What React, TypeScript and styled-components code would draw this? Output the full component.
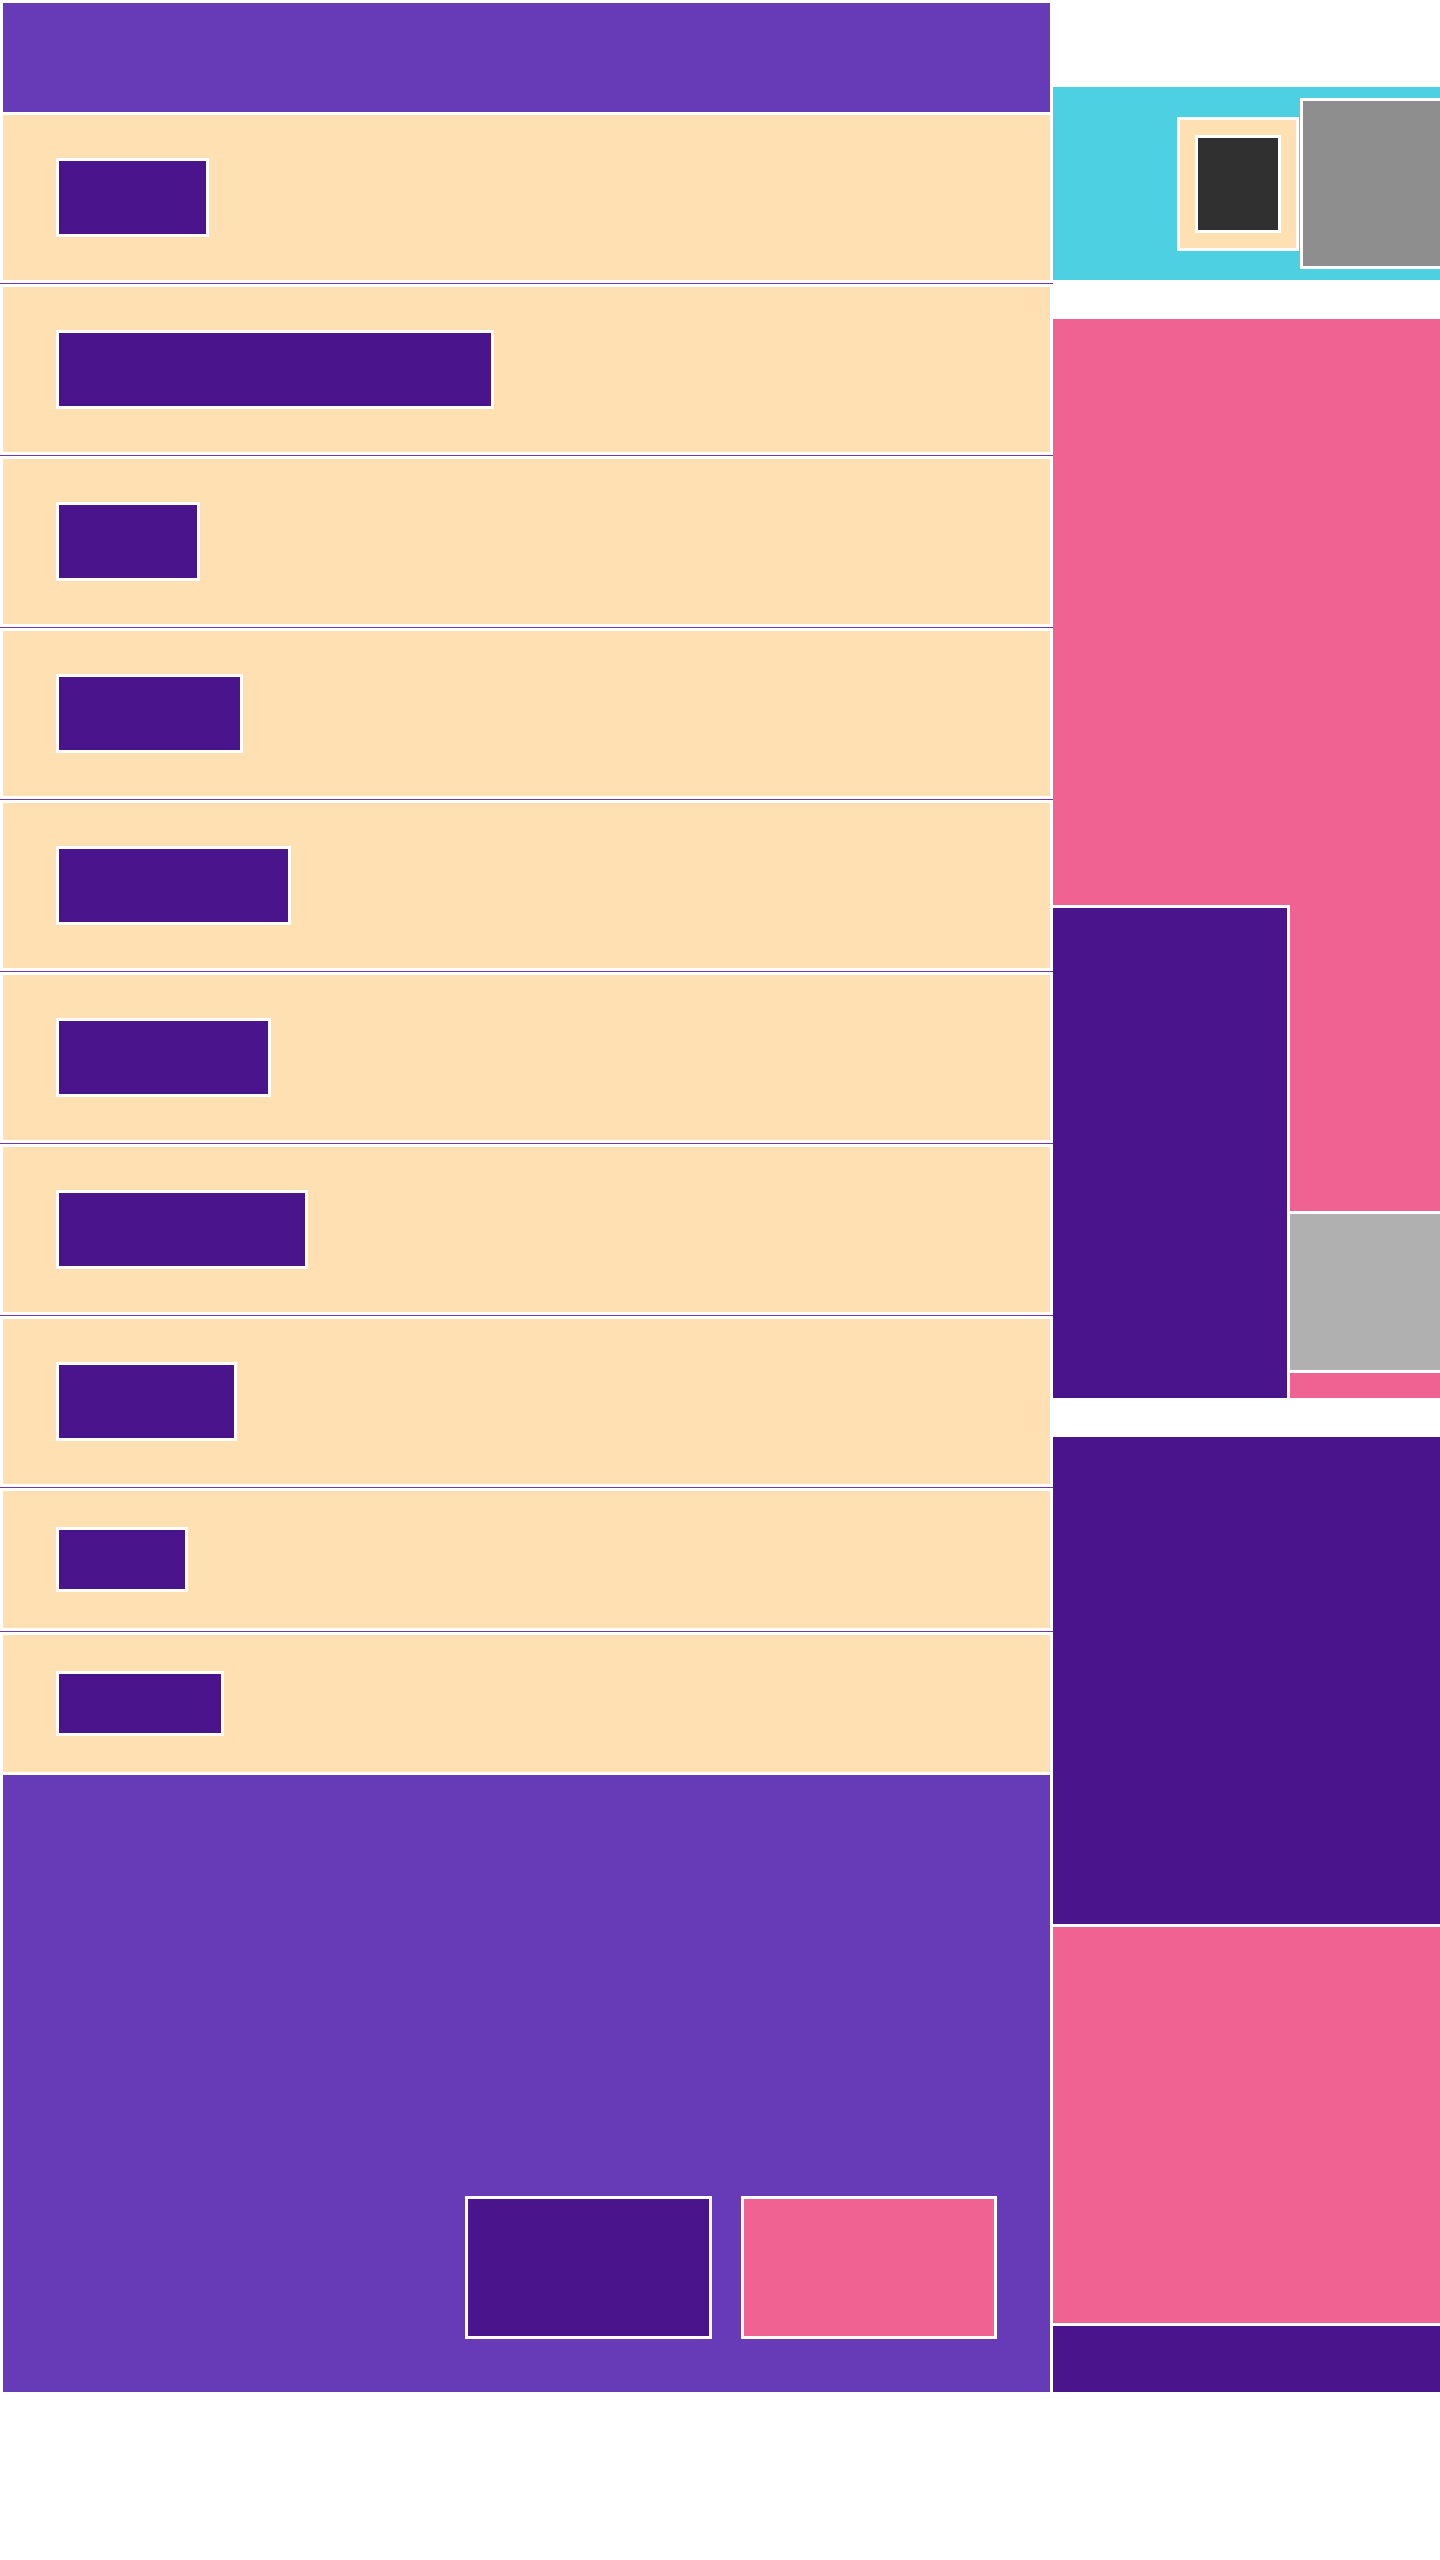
import styled, { createGlobalStyle } from 'styled-components';

const Global = createGlobalStyle`
  html, body {
    margin: 0;
    padding: 0;
    background: #ffffff;
    font-family: 'Liberation Sans', Arial, sans-serif;
  }
  *, *::before, *::after {
    box-sizing: border-box;
  }
`;

const c = {
  purple: '#673ab7',
  peach: '#ffe0b2',
  deep: '#4a148c',
  cyan: '#4dd0e1',
  pink: '#f06292',
  gray: '#8e8e8e',
  grayLight: '#b0b0b0',
  ink: '#303030',
  line: '#ffffff',
};

const Page = styled.div`
  display: flex;
  align-items: flex-start;
  width: 1440px;
  overflow: hidden;
`;

const Main = styled.main`
  flex: 0 0 1053px;
  display: flex;
  flex-direction: column;
  background: ${c.purple};
`;

const Header = styled.header`
  height: 112px;
  border: 3px solid ${c.line};
  border-bottom: none;
  background: ${c.purple};
`;

const List = styled.div`
  display: flex;
  flex-direction: column;
  gap: 1px;
`;

const Row = styled.div<{ $h: number }>`
  display: flex;
  align-items: center;
  height: ${(p) => p.$h}px;
  padding-left: 53px;
  border: 3px solid ${c.line};
  background: ${c.peach};
`;

const Label = styled.div<{ $w: number; $h: number }>`
  width: ${(p) => p.$w}px;
  height: ${(p) => p.$h}px;
  border: 3px solid ${c.line};
  background: ${c.deep};
`;

const Footer = styled.footer`
  display: flex;
  justify-content: flex-end;
  align-items: flex-end;
  gap: 29px;
  height: 620px;
  padding: 53px;
  border: 3px solid ${c.line};
  border-top: none;
  background: ${c.purple};
`;

const Action = styled.button<{ $tone: 'deep' | 'pink'; $w: number }>`
  width: ${(p) => p.$w}px;
  height: 143px;
  padding: 0;
  border: 3px solid ${c.line};
  background: ${(p) => (p.$tone === 'deep' ? c.deep : c.pink)};
  cursor: pointer;
`;

const Aside = styled.aside`
  flex: 0 0 500px;
  display: flex;
  flex-direction: column;
  gap: 33px;
  padding-top: 84px;
`;

const Toolbar = styled.div`
  display: flex;
  align-items: center;
  gap: 1px;
  height: 199px;
  padding-left: 124px;
  border: 3px solid ${c.line};
  border-left: none;
  background: ${c.cyan};
`;

const Tile = styled.div`
  display: flex;
  padding: 15px;
  border: 3px solid ${c.line};
  background: ${c.peach};
`;

const Chip = styled.div`
  width: 86px;
  height: 98px;
  border: 3px solid ${c.line};
  background: ${c.ink};
`;

const Preview = styled.div`
  flex: 0 0 240px;
  height: 171px;
  border: 3px solid ${c.line};
  background: ${c.gray};
`;

const Stage = styled.section`
  display: flex;
  align-items: flex-end;
  height: 1085px;
  border: 3px solid ${c.line};
  border-left: none;
  background: ${c.pink};
`;

const Column = styled.div`
  flex: 0 0 237px;
  height: 493px;
  border-top: 3px solid ${c.line};
  border-right: 3px solid ${c.line};
  background: ${c.deep};
`;

const Caption = styled.div`
  flex: 1;
  height: 162px;
  margin-bottom: 25px;
  border-top: 3px solid ${c.line};
  border-bottom: 3px solid ${c.line};
  background: ${c.grayLight};
`;

const Panel = styled.section`
  display: flex;
  flex-direction: column;
  height: 961px;
  padding: 487px 0 66px;
  border: 3px solid ${c.line};
  border-left: none;
  background: ${c.deep};
`;

const Card = styled.div`
  flex: 1;
  border-top: 3px solid ${c.line};
  border-bottom: 3px solid ${c.line};
  background: ${c.pink};
`;

const rows = [
  { w: 153, h: 171, bar: 79 },
  { w: 438, h: 171, bar: 79 },
  { w: 144, h: 171, bar: 79 },
  { w: 187, h: 171, bar: 79 },
  { w: 235, h: 171, bar: 79 },
  { w: 215, h: 171, bar: 79 },
  { w: 252, h: 171, bar: 79 },
  { w: 181, h: 171, bar: 79 },
  { w: 132, h: 143, bar: 65 },
  { w: 168, h: 143, bar: 65 },
];

export default function App() {
  return (
    <>
      <Global />
      <Page>
        <Main>
          <Header />
          <List>
            {rows.map((r, i) => (
              <Row key={i} $h={r.h}>
                <Label $w={r.w} $h={r.bar} />
              </Row>
            ))}
          </List>
          <Footer>
            <Action $tone="deep" $w={247} aria-label="primary" />
            <Action $tone="pink" $w={256} aria-label="secondary" />
          </Footer>
        </Main>
        <Aside>
          <Toolbar>
            <Tile>
              <Chip />
            </Tile>
            <Preview />
          </Toolbar>
          <Stage>
            <Column />
            <Caption />
          </Stage>
          <Panel>
            <Card />
          </Panel>
        </Aside>
      </Page>
    </>
  );
}
